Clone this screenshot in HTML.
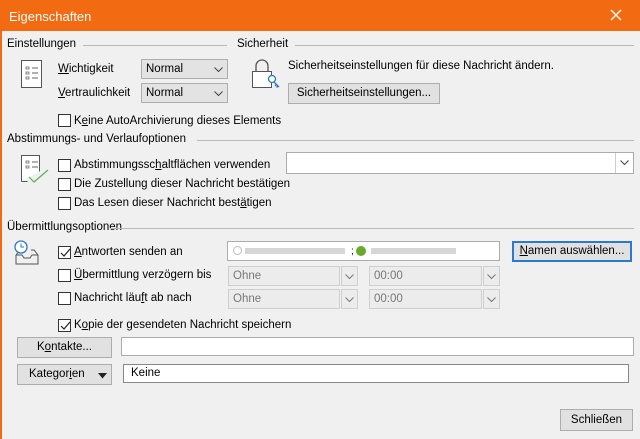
<!DOCTYPE html>
<html><head><meta charset="utf-8"><style>
*{margin:0;padding:0;box-sizing:border-box}
body{width:640px;height:439px;background:#f0f0f0;font-family:"Liberation Sans",sans-serif;font-size:11.5px;color:#000;position:relative;overflow:hidden}
.a{position:absolute;white-space:nowrap}
.tb{left:0;top:0;width:640px;height:31px;background:#f26b12;color:#fff;font-size:13px;padding:9px 0 0 9px}
.lb{left:0;top:31px;width:2px;height:408px;background:#f26b12}
.line{position:absolute;height:1px;background:#b9b9b9}
.cmb{position:absolute;background:#e3e3e3;border:1px solid #adadad}
.cmb span{position:absolute;left:4px;top:3px}
.inp{position:absolute;background:#fff;border:1px solid #acacac}
.btn{position:absolute;background:#e1e1e1;border:1px solid #adadad;text-align:center}
.cb{position:absolute;width:13px;height:13px;border:1px solid #333;background:#fff}
.dis{position:absolute;background:#ececec;border:1px solid #cfcfcf;color:#777}
.arr{position:absolute;border:1px solid #cfcfcf;background:#ececec;width:17px}
u{text-decoration:underline}
</style></head><body>
<div class="a tb">Eigenschaften</div>
<svg class="a" style="left:610px;top:9px" width="12" height="12"><path d="M1 1L11 11M11 1L1 11" stroke="#fff" stroke-width="1.3"/></svg>
<div class="a lb"></div>

<div class="a" style="left:7px;top:38px">Einstellungen</div><div class="line" style="left:83px;top:45px;width:144px"></div>
<div class="a" style="left:237px;top:38px">Sicherheit</div><div class="line" style="left:295px;top:45px;width:339px"></div>

<svg class="a" style="left:20px;top:59px" width="24" height="30"><rect x="1.5" y="1.5" width="20" height="27" fill="#fff" stroke="#555"/><path d="M6 8h3v2H6zM6 13h3v2H6zM6 18h3v2H6z" fill="none" stroke="#666" stroke-width=".8"/><path d="M12 9h6M12 14h6M12 19h6" stroke="#666"/></svg>
<div class="a" style="left:58px;top:63px"><u>W</u>ichtigkeit</div>
<div class="cmb" style="left:141px;top:59px;width:87px;height:20px"><span>Normal</span><svg class="a" style="left:72px;top:7px" width="9" height="6"><path d="M0.5 0.5l4 4 4-4" stroke="#444" fill="none"/></svg></div>
<div class="a" style="left:58px;top:87px"><u>V</u>ertraulichkeit</div>
<div class="cmb" style="left:141px;top:83px;width:87px;height:20px"><span>Normal</span><svg class="a" style="left:72px;top:7px" width="9" height="6"><path d="M0.5 0.5l4 4 4-4" stroke="#444" fill="none"/></svg></div>

<svg class="a" style="left:250px;top:59px" width="32" height="32"><path d="M6 12V7a6 6 0 0 1 12 0v5" fill="none" stroke="#555" stroke-width="1.3"/><rect x="2.5" y="12.5" width="19" height="16" fill="#fff" stroke="#555"/><circle cx="22" cy="20" r="3.5" fill="#fff" stroke="#2b79c2" stroke-width="1.3"/><path d="M24 23l5 5M26.5 25.5l-1.5 1.5M28 27l-1.5 1.5" stroke="#2b79c2" stroke-width="1.3"/></svg>
<div class="a" style="left:288px;top:60px">Sicherheitseinstellungen für diese Nachricht ändern.</div>
<div class="btn" style="left:288px;top:83px;width:152px;height:21px;padding-top:3px">Sicherheitseinstellungen...</div>

<div class="cb" style="left:58px;top:114px"></div><div class="a" style="left:74px;top:115px">K<u>e</u>ine AutoArchivierung dieses Elements</div>

<div class="a" style="left:7px;top:133px">Abstimmungs- und Verlaufoptionen</div><div class="line" style="left:197px;top:140px;width:437px"></div>
<svg class="a" style="left:20px;top:154px" width="30" height="30"><path d="M1.5 27.5V1.5h18v16" fill="#fff" stroke="#555"/><path d="M1.5 27.5h6" stroke="#555"/><path d="M6 7h3v2H6zM6 12h3v2H6z" fill="none" stroke="#666" stroke-width=".8"/><path d="M12 8h6M12 13h6" stroke="#666"/><path d="M9 23l5 5 14-12" stroke="#5cae5c" fill="none" stroke-width="1.2"/></svg>
<div class="cb" style="left:58px;top:159px"></div><div class="a" style="left:74px;top:159px">Abstimmungssc<u>h</u>altflächen verwenden</div>
<div class="inp" style="left:286px;top:152px;width:348px;height:22px"><div class="a" style="right:0;top:0;width:18px;height:20px;border-left:1px solid #ccc"></div><svg class="a" style="right:4px;top:7px" width="9" height="6"><path d="M0.5 0.5l4 4 4-4" stroke="#444" fill="none"/></svg></div>
<div class="cb" style="left:58px;top:178px"></div><div class="a" style="left:74px;top:178px">Die Zustellun<u>g</u> dieser Nachricht bestätigen</div>
<div class="cb" style="left:58px;top:197px"></div><div class="a" style="left:74px;top:197px">Das Lesen dieser Nachricht best<u>ä</u>tigen</div>

<div class="a" style="left:7px;top:221px">Übermittlungsoptionen</div><div class="line" style="left:110px;top:228px;width:524px"></div>
<svg class="a" style="left:13px;top:240px" width="28" height="26"><path d="M3 15v9h22v-9l-4-5h-3M3 15l4-5h1M3 15h6l2 3h6l2-3h6" fill="none" stroke="#555"/><circle cx="8" cy="7" r="6" fill="#fff" stroke="#2b79c2" stroke-width="1.3"/><path d="M8 3.5V7h3" stroke="#2b79c2" fill="none"/></svg>
<div class="cb" style="left:58px;top:246px"></div><svg class="a" style="left:59px;top:247px" width="12" height="12"><path d="M2 6l3 3 6-7" stroke="#222" fill="none" stroke-width="1.2"/></svg>
<div class="a" style="left:74px;top:246px"><u>A</u>ntworten senden an</div>
<div class="inp" style="left:227px;top:241px;width:273px;height:20px">
<div class="a" style="left:5px;top:4px;width:9px;height:9px;border:1px solid #bbb;border-radius:50%"></div>
<div class="a" style="left:17px;top:6px;width:100px;height:6px;background:#d6d6d6"></div>
<div class="a" style="left:123px;top:4px;font-size:10px">;</div>
<div class="a" style="left:128px;top:4px;width:10px;height:10px;border-radius:50%;background:#6aaa2a"></div>
<div class="a" style="left:143px;top:6px;width:85px;height:6px;background:#d6d6d6"></div></div>
<div class="btn" style="left:512px;top:241px;width:120px;height:21px;border:2px solid #2a7ad4;padding-top:2px"><u>N</u>amen auswählen...</div>

<div class="cb" style="left:58px;top:269px"></div><div class="a" style="left:74px;top:269px"><u>Ü</u>bermittlung verzögern bis</div>
<div class="dis" style="left:228px;top:266px;width:112px;height:20px;padding:3px 4px">Ohne</div><div class="arr" style="left:341px;top:266px;height:20px"><svg class="a" style="left:3px;top:7px" width="9" height="6"><path d="M0.5 0.5l4 4 4-4" stroke="#777" fill="none"/></svg></div>
<div class="dis" style="left:369px;top:266px;width:113px;height:20px;padding:3px 4px">00:00</div><div class="arr" style="left:483px;top:266px;height:20px"><svg class="a" style="left:3px;top:7px" width="9" height="6"><path d="M0.5 0.5l4 4 4-4" stroke="#777" fill="none"/></svg></div>

<div class="cb" style="left:58px;top:292px"></div><div class="a" style="left:74px;top:292px">Nachricht läu<u>f</u>t ab nach</div>
<div class="dis" style="left:228px;top:289px;width:112px;height:20px;padding:3px 4px">Ohne</div><div class="arr" style="left:341px;top:289px;height:20px"><svg class="a" style="left:3px;top:7px" width="9" height="6"><path d="M0.5 0.5l4 4 4-4" stroke="#777" fill="none"/></svg></div>
<div class="dis" style="left:369px;top:289px;width:113px;height:20px;padding:3px 4px">00:00</div><div class="arr" style="left:483px;top:289px;height:20px"><svg class="a" style="left:3px;top:7px" width="9" height="6"><path d="M0.5 0.5l4 4 4-4" stroke="#777" fill="none"/></svg></div>

<div class="cb" style="left:58px;top:319px"></div><svg class="a" style="left:59px;top:320px" width="12" height="12"><path d="M2 6l3 3 6-7" stroke="#222" fill="none" stroke-width="1.2"/></svg>
<div class="a" style="left:74px;top:319px">K<u>o</u>pie der gesendeten Nachricht speichern</div>

<div class="btn" style="left:17px;top:337px;width:95px;height:21px;padding-top:3px">K<u>o</u>ntakte...</div>
<div class="inp" style="left:121px;top:337px;width:513px;height:19px"></div>
<div class="btn" style="left:17px;top:364px;width:95px;height:21px;padding:3px 0 0 0;text-align:left"><span style="margin-left:11px">Kategor<u>i</u>en</span><svg class="a" style="left:80px;top:8px" width="9" height="6"><path d="M0 0h9L4.5 5.5z" fill="#222"/></svg></div>
<div class="inp" style="left:123px;top:364px;width:506px;height:19px;border-color:#888;padding:2px 7px">Keine</div>

<div class="btn" style="left:560px;top:409px;width:73px;height:22px;padding-top:4px">Schließen</div>
</body></html>
